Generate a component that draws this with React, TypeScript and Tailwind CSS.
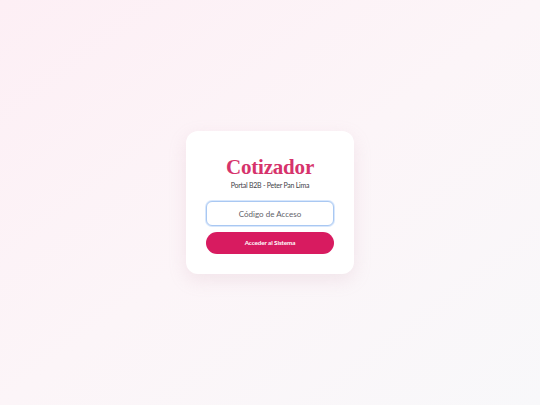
import React from 'react';

const App: React.FC = () => {
  return (
    <div className="w-[540px] h-[405px] flex items-center justify-center bg-gradient-to-br from-[#fdeff5] via-[#fcf5f8] to-[#f8f8fa]" style={{ fontFamily: '"Lato", "Noto Sans", sans-serif' }}>
      <div className="w-[168px] bg-white rounded-[12px] shadow-[0_6px_18px_rgba(200,150,170,0.18)] px-5 pt-[23px] pb-5 flex flex-col items-center">
        <h1 className="text-[21px] leading-[26px] font-bold tracking-[-0.2px] text-[#d6336c]" style={{ fontFamily: '"Liberation Serif", "DejaVu Serif", serif' }}>
          Cotizador
        </h1>
        <p className="mt-0 text-[7px] leading-[10px] tracking-[-0.25px] text-[#3f3f48]">Portal B2B - Peter Pan Lima</p>
        <input
          className="mt-[11px] w-full h-[25px] rounded-[6px] border-[1.5px] border-[#a9c8f2] bg-white text-center text-[8px] text-gray-600 placeholder:text-[#5f5f69] outline-none shadow-[0_0_0_1px_rgba(190,215,250,0.6)]"
          placeholder="Código de Acceso"
        />
        <button className="mt-[6px] w-full h-[22px] rounded-full bg-[#d81b60] text-white text-[6.3px] font-bold tracking-[-0.1px]">
          Acceder al Sistema
        </button>
      </div>
    </div>
  );
};

export default App;
